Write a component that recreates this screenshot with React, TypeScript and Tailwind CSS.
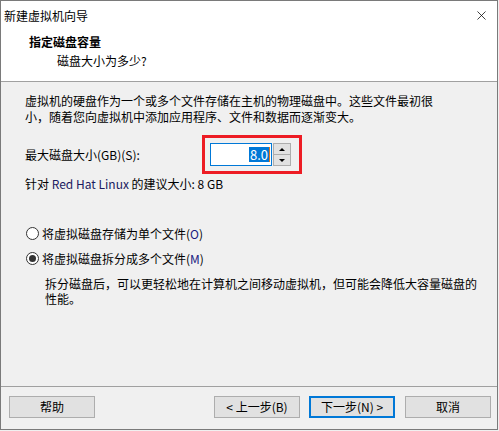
import { X } from "lucide-react";

const font = "font-['Segoe_UI','Noto_Sans_CJK_SC',sans-serif]";

function Radio({ checked, label, hotkey }: { checked?: boolean; label: string; hotkey: string }) {
  return (
    <div className="flex items-center gap-[3px]">
      <span className="w-[13px] h-[13px] rounded-full border border-[#333] bg-white flex items-center justify-center">
        {checked && <span className="w-[7px] h-[7px] rounded-full bg-[#333]" />}
      </span>
      <span>
        {label}(<span className="text-[#1a1a80]">{hotkey}</span>)
      </span>
    </div>
  );
}

function Btn({ children, primary }: { children: React.ReactNode; primary?: boolean }) {
  return (
    <button
      className={
        "w-[86px] h-[22px] bg-[#e1e1e1] flex items-center justify-center text-[12px] text-black " +
        (primary ? "border-2 border-[#0078d7]" : "border border-[#adadad]")
      }
    >
      {children}
    </button>
  );
}

export default function App() {
  return (
    <div className={`w-[499px] h-[431px] bg-[#f0f0f0] ${font} text-[12px] text-black leading-none`}>
      <div className="w-[498px] h-[430px] border border-[#7a7a7a] flex flex-col bg-[#f0f0f0]">
        {/* title bar */}
        <div className="h-[29px] bg-white flex items-center justify-between pl-[3px] pr-[8px]">
          <span className="text-[12px]">新建虚拟机向导</span>
          <X className="w-[15px] h-[15px]" strokeWidth={1.2} />
        </div>

        {/* header */}
        <div className="h-[52px] bg-white border-b border-[#a0a0a0] pl-[28px] pt-[6px]">
          <div className="font-bold text-[12px]">指定磁盘容量</div>
          <div className="pl-[28px] mt-[7px]">磁盘大小为多少?</div>
        </div>

        {/* body */}
        <div className="flex-1 pl-[24px] pr-[8px] pt-[11px]">
          <p className="leading-[16px] w-[420px]">
            虚拟机的硬盘作为一个或多个文件存储在主机的物理磁盘中。这些文件最初很小，随着您向虚拟机中添加应用程序、文件和数据而逐渐变大。
          </p>

          <div className="flex items-center mt-[10px]">
            <span className="w-[177px]">最大磁盘大小(GB)(S):</span>
            <div className="w-[100px] h-[39px] border-[3px] border-[#ed1c24] flex items-center pl-[5px]">
              <div className="w-[62px] h-[23px] bg-white border border-[#0078d7] flex items-center justify-end pr-[1px]">
                <span className="bg-[#0078d7] text-white px-[1px] text-[13px] leading-[15px]">8.0</span>
                <span className="w-[1px] h-[15px] bg-[#e87511]" />
              </div>
              <div className="flex flex-col w-[18px] h-[23px] ml-[1px]">
                <div className="flex-1 bg-[#e1e1e1] border border-[#adadad] flex items-center justify-center">
                  <span className="w-0 h-0 border-l-[3px] border-r-[3px] border-b-[3px] border-l-transparent border-r-transparent border-b-black" />
                </div>
                <div className="flex-1 bg-[#e1e1e1] border border-[#adadad] border-t-0 flex items-center justify-center">
                  <span className="w-0 h-0 border-l-[3px] border-r-[3px] border-t-[3px] border-l-transparent border-r-transparent border-t-black" />
                </div>
              </div>
            </div>
          </div>

          <div className="mt-[4px]">
            针对 <span className="text-[#1a1a60]">Red Hat Linux</span> 的建议大小: 8 GB
          </div>

          <div className="mt-[37px] pl-[1px] flex flex-col gap-[12px]">
            <Radio label="将虚拟磁盘存储为单个文件" hotkey="O" />
            <Radio checked label="将虚拟磁盘拆分成多个文件" hotkey="M" />
          </div>
          <p className="pl-[20px] mt-[11px] leading-[15px] w-[460px]">
            拆分磁盘后，可以更轻松地在计算机之间移动虚拟机，但可能会降低大容量磁盘的性能。
          </p>
        </div>

        {/* footer */}
        <div className="h-[43px] border-t border-[#a0a0a0] flex items-center pl-[8px] pr-[6px] pb-[3px]">
          <Btn>帮助</Btn>
          <div className="ml-auto flex gap-[9px]">
            <Btn>&lt; 上一步(B)</Btn>
            <Btn primary>下一步(N) &gt;</Btn>
            <div className="ml-[1px]">
              <Btn>取消</Btn>
            </div>
          </div>
        </div>
      </div>
    </div>
  );
}
